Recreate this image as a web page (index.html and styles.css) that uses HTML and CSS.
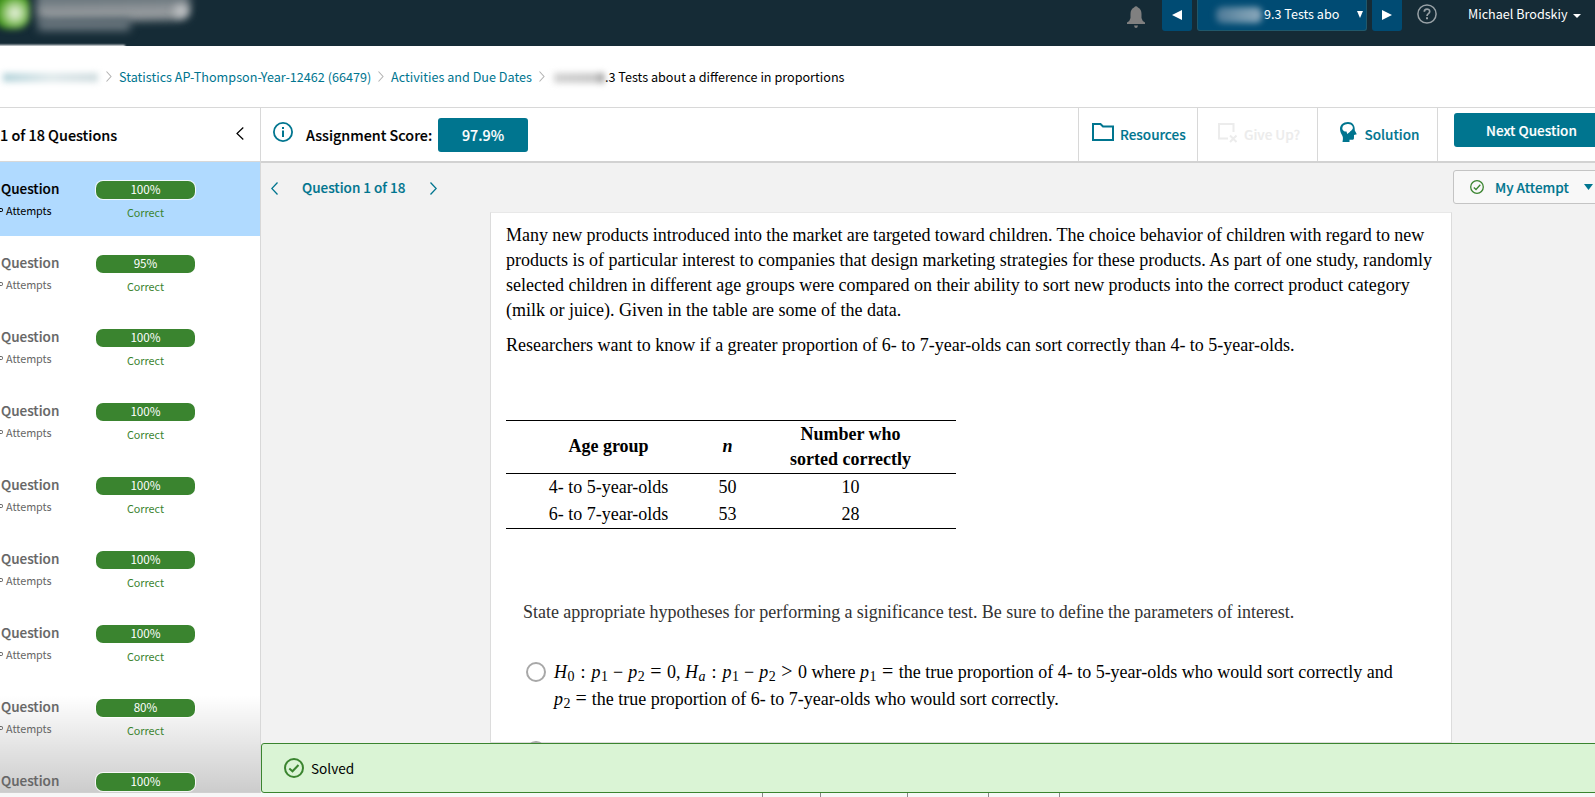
FILE: index.html
```html
<!DOCTYPE html>
<html lang="en">
<head>
<meta charset="utf-8">
<title>9.3 Tests about a difference in proportions</title>
<link rel="stylesheet" href="styles.css">
</head>
<body>
<header class="topbar">
  <div class="brand"><span class="brand-mark"></span><span class="brand-name"></span><span class="brand-tip"></span><span class="brand-sub"></span><span class="brand-edge"></span></div>
  <div class="top-tools">
    <svg class="bell" width="18" height="22" viewBox="0 0 18 22"><path d="M7 1.500Q9-1 11 1.500Q14.500 3 14.500 8V12Q15 15 18 16.500V18H0V16.500Q3 15 3.500 12V8Q3.500 3 7 1.500ZM7 19.500H11Q10.500 22 9 22T7 19.500Z" fill="#808080"/></svg>
    <button class="nav-btn"><svg width="10" height="10"><path d="M0 5L10 0V10Z" fill="#fff"/></svg></button>
    <div class="picker"><span class="redact picker-redact"></span><span class="picker-text">9.3 Tests abo</span><svg class="picker-caret" width="6" height="7"><path d="M0 0H6L3 7Z" fill="#fff"/></svg></div>
    <button class="nav-btn nav-next"><svg width="10" height="10"><path d="M10 5L0 0V10Z" fill="#fff"/></svg></button>
    <svg class="help" width="20" height="20" viewBox="0 0 20 20" fill="none" stroke="#98a1a6" stroke-width="1.500"><circle cx="10" cy="10" r="9.100"/><path d="M7.300 7.800C7.300 4.300 12.700 4.300 12.700 7.500C12.700 9.700 10 9.500 10 12" stroke-width="1.700"/><path d="M10 13.300V15.200" stroke-width="2"/></svg>
    <span class="user">Michael Brodskiy</span>
    <svg class="user-caret" width="8" height="4"><path d="M0 0H8L4 4Z" fill="#fff"/></svg>
  </div>
</header>
<nav class="crumbs">
  <span class="redact crumb-school"></span>
  <svg class="sep" width="6" height="11"><path d="M.5.5L5 5.500L.5 10.500"/></svg>
  <a class="crumb-a">Statistics AP-Thompson-Year-12462 (66479)</a>
  <svg class="sep" width="6" height="11"><path d="M.5.5L5 5.500L.5 10.500"/></svg>
  <a class="crumb-b">Activities and Due Dates</a>
  <svg class="sep" width="6" height="11"><path d="M.5.5L5 5.500L.5 10.500"/></svg>
  <span class="redact crumb-prefix"></span><span class="crumb-c">.3 Tests about a difference in proportions</span>
</nav>
<div class="workspace">
  <aside class="sidebar">
    <div class="side-head"><span class="side-title">1 of 18 Questions</span><svg width="8" height="13"><path d="M7.300.5L1 6.500L7.300 12.500" fill="none" stroke="#000" stroke-width="1.200"/></svg></div>
    <div class="q-list">
      <div class="q active"><div class="q-left"><b>Question</b><small><i></i>Attempts</small></div><div class="q-score"><em>100%</em><span>Correct</span></div></div>
      <div class="q"><div class="q-left"><b>Question</b><small><i></i>Attempts</small></div><div class="q-score"><em>95%</em><span>Correct</span></div></div>
      <div class="q"><div class="q-left"><b>Question</b><small><i></i>Attempts</small></div><div class="q-score"><em>100%</em><span>Correct</span></div></div>
      <div class="q"><div class="q-left"><b>Question</b><small><i></i>Attempts</small></div><div class="q-score"><em>100%</em><span>Correct</span></div></div>
      <div class="q"><div class="q-left"><b>Question</b><small><i></i>Attempts</small></div><div class="q-score"><em>100%</em><span>Correct</span></div></div>
      <div class="q"><div class="q-left"><b>Question</b><small><i></i>Attempts</small></div><div class="q-score"><em>100%</em><span>Correct</span></div></div>
      <div class="q"><div class="q-left"><b>Question</b><small><i></i>Attempts</small></div><div class="q-score"><em>100%</em><span>Correct</span></div></div>
      <div class="q"><div class="q-left"><b>Question</b><small><i></i>Attempts</small></div><div class="q-score"><em>80%</em><span>Correct</span></div></div>
      <div class="q"><div class="q-left"><b>Question</b></div><div class="q-score"><em>100%</em></div></div>
    </div>
    <div class="fade"></div>
  </aside>
  <main class="main">
    <div class="toolbar">
      <svg class="info" width="20" height="20" viewBox="0 0 20 20" fill="none" stroke="#00758f"><circle cx="10" cy="10" r="9.100" stroke-width="1.800"/><path d="M10 8.500V15M10 5V7" stroke-width="2"/></svg>
      <span class="score-label">Assignment Score:</span>
      <span class="score">97.9%</span>
      <div class="tools">
        <div class="tool resources"><svg width="22" height="18"><path d="M1 17V1H8.500L11 3.500H21V17Z" fill="none" stroke="#00758f" stroke-width="2"/></svg><span>Resources</span></div>
        <div class="tool giveup"><svg width="20" height="20"><path d="M10 15.500H1V1H15.500V9M12 12.500L18.500 19M18.500 12.500L12 19" fill="none" stroke="#ececec" stroke-width="2"/></svg><span>Give Up?</span></div>
        <div class="tool solution"><svg width="17" height="20" viewBox="0 0 17 20"><path fill-rule="evenodd" d="M8 0C3 0 0 3 0 7C0 10 1.500 12 2.500 14C3.500 16.500 2.500 19 2.500 20H9.500V17.800H13Q14.200 17.500 14 15L14 13L16.800 12.300L14.800 8.500C15 3 12.500 0 8 0ZM7.500 2C11.500 1.500 14.500 5.500 12 7.700C11 9 10.500 8.800 9.800 10L7.200 12L6.500 9.600C4.500 9.800 2.400 8.500 2.300 6.400C2.300 4 4.200 2.200 7.500 2Z" fill="#00758f"/></svg><span>Solution</span></div>
        <div class="next-wrap"><button class="next">Next Question</button></div>
      </div>
    </div>
    <div class="pager">
      <svg width="7" height="13"><path d="M6.500.5L.8 6.500L6.500 12.500"/></svg>
      <span class="page-label">Question 1 of 18</span>
      <svg width="7" height="13"><path d="M.5.5L6.200 6.500L.5 12.500"/></svg>
      <div class="attempt"><svg width="14" height="14" viewBox="0 0 14 14" fill="none" stroke="#3a842f" stroke-width="1.300"><circle cx="7" cy="7" r="6.300"/><path d="M3.800 7.500L6 9.500L10.300 4.800"/></svg><span>My Attempt</span><svg class="attempt-caret" width="9" height="6"><path d="M0 0H9L4.500 6Z" fill="#00758f"/></svg></div>
    </div>
    <article class="card">
      <p class="intro"><span class="tight">Many new products introduced into the market are targeted toward children. The choice behavior of children with regard to new</span><br>products is of particular interest to companies that design marketing strategies for these products. As part of one study, randomly<br><span class="snug">selected children in different age groups were compared on their ability to sort new products into the correct product category</span><br>(milk or juice). Given in the table are some of the data.</p>
      <p class="intro snug">Researchers want to know if a greater proportion of 6- to 7-year-olds can sort correctly than 4- to 5-year-olds.</p>
      <table class="data">
        <thead><tr><th class="age">Age group</th><th class="n"><i>n</i></th><th>Number who<br>sorted correctly</th></tr></thead>
        <tbody><tr><td>4- to 5-year-olds</td><td>50</td><td>10</td></tr><tr><td>6- to 7-year-olds</td><td>53</td><td>28</td></tr></tbody>
      </table>
      <p class="prompt">State appropriate hypotheses for performing a significance test. Be sure to define the parameters of interest.</p>
      <div class="option"><span class="radio"></span>
        <div class="answer"><div class="line1"><i>H</i><sub>0</sub><span class="colon">:</span><i>p</i><sub>1</sub><span class="bin">−</span><i>p</i><sub>2</sub><span class="rel">=</span>0, <i>H</i><sub><i>a</i></sub><span class="colon">:</span><i>p</i><sub>1</sub><span class="bin">−</span><i>p</i><sub>2</sub><span class="rel">&gt;</span>0 where <i>p</i><sub>1</sub><span class="rel">=</span>the true proportion of 4- to 5-year-olds who would sort correctly and</div><div class="line2"><i>p</i><sub>2</sub><span class="rel">=</span>the true proportion of 6- to 7-year-olds who would sort correctly.</div></div>
      </div>
      <div class="option option-next"><span class="radio"></span></div>
    </article>
    <div class="solved"><svg width="20" height="20" viewBox="0 0 20 20" fill="none" stroke="#3a842f" stroke-width="2"><circle cx="10" cy="10" r="9"/><path d="M5.300 10.500L8.500 13.300L14.500 7"/></svg><span>Solved</span></div>
  </main>
</div>
<footer class="foot"><i></i><i></i><i></i><i></i><i></i></footer>
</body>
</html>
```
FILE: styles.css
```css
* { box-sizing: border-box; }
body { margin: 0; width: 1595px; height: 797px; overflow: hidden; background: #fff; font-family: "Noto Sans CJK SC", "Noto Sans", sans-serif; font-size: 13.5px; color: #000; white-space: nowrap; }
button { border: 0; padding: 0; font: inherit; }
svg { display: block; flex: none; }
span, a { flex: none; }

.topbar { height: 46px; background: #152b36; display: flex; justify-content: space-between; overflow: hidden; }
.brand { position: relative; width: 220px; height: 46px; overflow: hidden; }
.brand span { position: absolute; }
.brand-mark { left: -6px; top: -8px; width: 36px; height: 37px; border-radius: 14px; background: radial-gradient(circle at 21px 21px, #dcecce 0 3px, #83bd60 12px, #3f9517 18px); filter: blur(3px); }
.brand-name { left: 36px; top: -14px; width: 154px; height: 35px; border-radius: 12px; background: linear-gradient(#6a767d 14px, #8d9397 22px, #a0a4a7); filter: blur(4px); transform: skewY(-1deg); }
.brand-tip { left: 174px; top: 5px; width: 14px; height: 12px; border-radius: 8px; background: #c3c6c8; filter: blur(4px); }
.brand-sub { left: 38px; top: 18px; width: 92px; height: 13px; background: #65727a; filter: blur(4px); }
.brand-edge { left: -5px; top: 45px; width: 130px; height: 6px; background: #fff; filter: blur(1px); }
.top-tools { display: flex; align-items: flex-start; color: #fff; }
.bell { margin: 6px 17px 0 0; }
.nav-btn { width: 30px; height: 31px; background: #004b73; border-radius: 0 0 3px 3px; display: flex; padding: 10px 0 0 10px; }
.picker { width: 170px; height: 31px; margin: 0 5px; background: #004b73; border: 1px solid #20586b; border-top: 0; border-radius: 0 0 3px 3px; display: flex; }
.redact { filter: blur(3px); }
.picker-redact { width: 46px; height: 16px; margin: 7px 2px 0 18px; border-radius: 6px; background: linear-gradient(90deg, #4b7896, #7599af 60%, #8aa7bb); }
.picker-text { line-height: 28px; font-size: 12.600px; width: 93px; }
.picker-caret { margin-top: 11px; }
.help { margin: 4px 31px 0 15px; }
.user { width: 99px; line-height: 28px; font-size: 12.600px; }
.user-caret { margin: 14px 14px 0 6px; }

.crumbs { height: 61px; display: flex; align-items: center; font-size: 12.630px; line-height: 58px; }
.crumb-school { width: 95px; height: 9px; margin: 2px 8px 0 3px; background: linear-gradient(90deg, #b4d3da, #dfe9eb 50%, #cfdcdf); }
.sep { fill: none; stroke: #b4b4b4; stroke-width: 1.100; }
.crumb-a { margin: 0 7px; width: 252px; color: #00758f; }
.crumb-b { margin: 0 7px; width: 141px; color: #00758f; }
.crumb-prefix { width: 50px; height: 10px; margin: 2px 1px 0 9px; background: linear-gradient(90deg, #d2d2d2, #c8c8c8 85%, #888); }
.crumb-c { margin: 0; }

.workspace { display: grid; grid-template-columns: 261px 1334px; height: 686px; border-top: 1px solid #d8d8d8; }
.sidebar { position: relative; border-right: 1px solid #d8d8d8; border-bottom: 1px solid #d0d0d0; overflow: hidden; }
.side-head { height: 54px; border-bottom: 1px solid #d8d8d8; display: flex; justify-content: space-between; padding: 19px 16px 0 0; }
.side-title { font-weight: 500; font-size: 14.400px; line-height: 17px; margin-top: -1px; }
.side-title, .q-left b, .toolbar span, .next, .page-label, .attempt span { -webkit-text-stroke: .15px currentColor; }
.q { height: 74px; display: flex; color: #666; }
.q-left { width: 96px; display: flex; flex-direction: column; padding-top: 16px; }
.q-left b { font-weight: 500; font-size: 13.500px; line-height: 20px; padding-left: 1px; }
.q-left small { display: flex; align-items: center; font-size: 10.800px; line-height: 16px; margin-top: 4px; }
.q-left i { width: 3px; height: 4px; border: 1px solid; border-left: 0; border-radius: 0 2px 2px 0; margin-right: 3px; }
.q-score { width: 99px; padding-top: 19px; text-align: center; color: #3a842f; font-size: 10.800px; }
.q-score em { display: block; height: 18px; line-height: 16px; border-radius: 7px; background: #3a842f; color: #fff; font-style: normal; font-size: 11.700px; box-shadow: 0 0 0 1px #ffffffd0; }
.q-score span { display: block; line-height: 16px; margin-top: 5px; }
.active { background: #b0daff; color: #000; }
.fade { position: absolute; left: 0; right: 0; bottom: 0; height: 97px; background: linear-gradient(transparent, #0003); z-index: 0; }
.q-left, .q-score { position: relative; z-index: 1; }

.main { display: flex; flex-direction: column; background: #f2f2f2; overflow: hidden; min-width: 0; }
.toolbar { flex: none; height: 55px; background: #fff; border-bottom: 2px solid #d2d2d2; display: flex; font-weight: 500; padding-left: 12px; }
.info { margin-top: 14px; }
.score-label { margin: 17px 0 0 13px; width: 132px; font-size: 14.300px; line-height: 20px; }
.score { margin-top: 10px; width: 90px; height: 34px; border-radius: 3px; background: #00758f; color: #fff; text-align: center; line-height: 33px; font-size: 14.300px; }
.tools { margin-left: auto; display: flex; color: #00758f; font-size: 13.500px; }
.tool { display: flex; border-left: 1px solid #d8d8d8; line-height: 20px; padding-top: 15px; height: 53px; }
.tool span { margin-top: 1px; }
.resources { width: 119px; padding-left: 13px; gap: 6px; }
.giveup { width: 120px; padding-left: 20px; gap: 6px; color: #ececec; }
.solution { width: 120px; padding-left: 22px; gap: 7.5px; padding-top: 14px; }
.solution span { margin-top: 2px; }
.next-wrap { width: 158px; border-left: 1px solid #d8d8d8; padding: 5px 0 0 16px; }
.next { width: 154px; height: 34px; border-radius: 3px; background: #00758f; color: #fff; font-weight: 500; font-size: 13.500px; line-height: 34px; text-align: left; padding-left: 32px; }
.pager { flex: none; height: 49px; display: flex; padding: 19px 0 0 10px; color: #00758f; font-size: 13.500px; font-weight: 500; fill: none; stroke-width: 1.300; line-height: 20px; }
.pager > svg { stroke: #00758f; }
.page-label { margin: -5px 25px 0 24px; width: 103px; }
.attempt { margin: -12px -6px 0 auto; width: 148px; height: 34px; flex: none; border: 1px solid #c4c4c4; border-radius: 3px; background: #f8f8f8; display: flex; padding: 9px 0 0 16px; }
.attempt span { margin: -3px 14px 0 11px; width: 75px; }
.attempt-caret { margin-top: 4px; }

.card { flex: none; width: 962px; height: 531px; margin-left: 229px; background: #fff; border: 1px solid #dcdcdc; border-top-color: #e8e8e8; padding: 10px 0 0 15px; font-family: "Liberation Serif", "Times New Roman", serif; font-size: 18px; line-height: 25px; }
.intro { margin: 0 0 10px; }
.tight { word-spacing: -.25px; }
.snug { word-spacing: -.06px; }
.data { width: 450px; margin: 62px 0 71px; border-collapse: collapse; text-align: center; table-layout: fixed; border-top: 1px solid #000; border-bottom: 1px solid #000; }
.data th, .data td { padding: 1px 0 1px 1px; height: 27px; }
.data th:first-child { width: 204px; }
.data .n { width: 34px; }
.data .age, .data .n { padding-bottom: 3px; }
.data thead tr { border-bottom: 1px solid #000; }
.prompt { margin: 0 0 34px 17px; color: #333; word-spacing: -.19px; }
.option { display: flex; margin-left: 20px; gap: 8px; }
.radio { width: 20px; height: 20px; border: 2px solid #a8a8a8; border-radius: 50%; margin-top: 3px; }
.answer { line-height: 27px; }
.line1, .line2 { height: 27px; }
.answer sub { font-size: 14px; line-height: 0; vertical-align: -3px; margin-left: .5px; }
.rel { margin: 0 5px; font-size: 20px; line-height: 0; }
.line1 .rel { margin: 0 5.5px; }
.colon { margin: 0 6px; }
.bin { margin: 0 5px; }
.option-next { margin-top: 25px; }

.solved { position: absolute; left: 261px; top: 743px; width: 1340px; height: 50px; border: 1px solid #3a842f; border-radius: 3px 0 0 3px; background: #daf4d5; display: flex; padding: 14px 0 0 22px; font-size: 13.600px; line-height: 21px; }
.solved span { margin-left: 7px; }
.foot { height: 4px; background: #f7f7f7; display: flex; padding-left: 762px; }
.foot i { width: 1px; height: 4px; background: #888; margin-right: 57px; }
.foot i:nth-child(2) { margin-right: 86px; }
.foot i:nth-child(3) { margin-right: 80px; }
.foot i:nth-child(4) { margin-right: 70px; }
```
